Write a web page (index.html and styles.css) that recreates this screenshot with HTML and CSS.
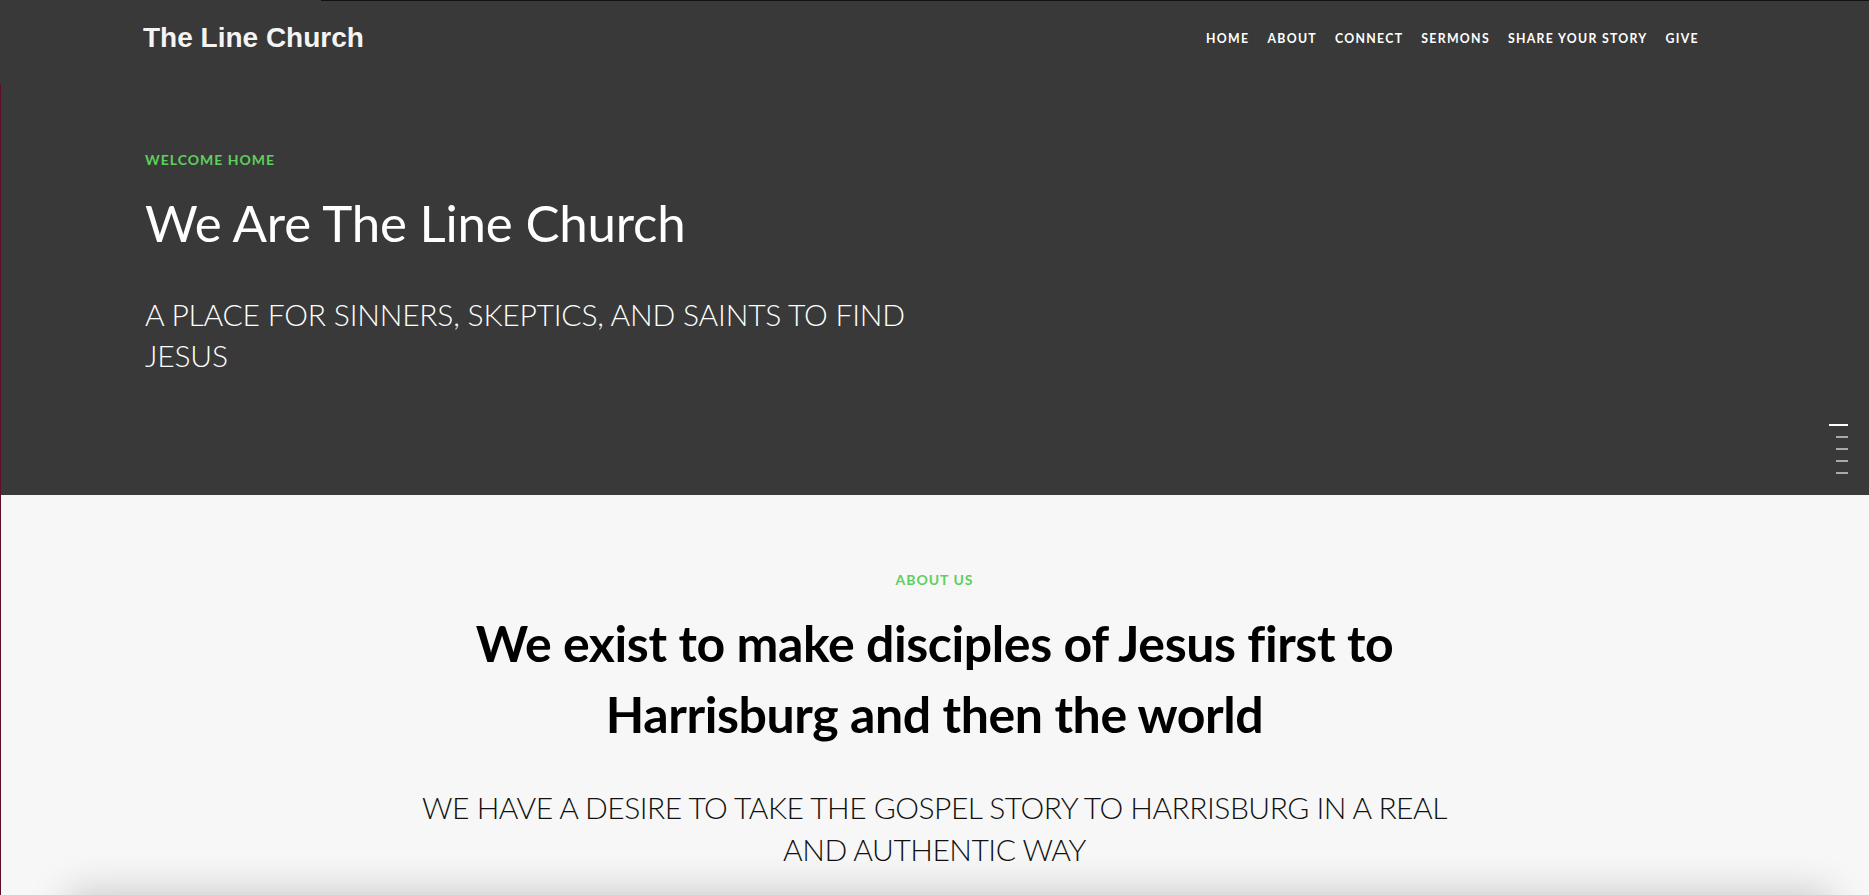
FILE: index.html
```html
<!DOCTYPE html>
<html lang="en">
<head>
<meta charset="utf-8">
<title>The Line Church</title>
<link rel="stylesheet" href="styles.css">
</head>
<body>
<div class="frame">
  <section class="hero">
    <header class="topbar">
      <div class="logo">The Line Church</div>
      <nav class="nav">
        <a href="#">Home</a>
        <a href="#">About</a>
        <a href="#">Connect</a>
        <a href="#">Sermons</a>
        <a href="#">Share Your Story</a>
        <a href="#">Give</a>
      </nav>
    </header>
    <div class="hero-content">
      <p class="eyebrow">Welcome Home</p>
      <h1 class="hero-title">We Are The Line Church</h1>
      <p class="hero-sub">A place for sinners, skeptics, and saints to find Jesus</p>
    </div>
    <div class="scroll-dots">
      <span class="dot active"></span>
      <span class="dot"></span>
      <span class="dot"></span>
      <span class="dot"></span>
      <span class="dot"></span>
    </div>
  </section>
  <section class="about">
    <p class="eyebrow center">About Us</p>
    <h2 class="about-title">We exist to make disciples of Jesus first to Harrisburg and then the world</h2>
    <p class="about-sub">We have a desire to take the gospel story to Harrisburg in a real and authentic way</p>
  </section>
</div>
<div class="bottom-shade"></div>
</body>
</html>
```

FILE: styles.css
```css
* { box-sizing: border-box; }
html, body { margin: 0; padding: 0; }
body {
  background: #f7f7f7;
  font-family: "Lato", "Noto Sans", sans-serif;
  height: 895px;
  overflow: hidden;
}
.frame {
  position: relative;
  height: 895px;
  overflow: hidden;
}
.frame::before {
  content: "";
  position: absolute;
  left: 0;
  top: 84px;
  bottom: 0;
  width: 1px;
  background: #5e0f27;
  z-index: 5;
}
.frame::after {
  content: "";
  position: absolute;
  left: 321px;
  right: 0;
  top: 0;
  height: 1px;
  background: #111;
  z-index: 5;
}
.hero {
  position: relative;
  background: #393939;
  height: 495px;
  color: #fff;
}
.topbar {
  height: 74px;
  display: flex;
  align-items: center;
  justify-content: space-between;
  padding: 0 170px 0 143px;
}
.logo {
  font-family: "Liberation Sans", Arial, sans-serif;
  font-weight: 700;
  font-size: 28px;
  color: #f4f4f4;
  padding-top: 1px;
}
.nav {
  display: flex;
  gap: 18px;
  padding-top: 2px;
}
.nav a {
  color: #fff;
  text-decoration: none;
  text-transform: uppercase;
  font-weight: 700;
  font-size: 12.3px;
  letter-spacing: 1.3px;
}
.hero-content {
  padding: 76px 0 0 145px;
}
.eyebrow {
  margin: 0;
  color: #5dcf5d;
  font-size: 14px;
  line-height: 20px;
  font-weight: 700;
  letter-spacing: 1px;
  text-transform: uppercase;
}
.eyebrow.center { text-align: center; }
.hero-title {
  margin: 18px 0 0;
  font-weight: 400;
  font-size: 51px;
  line-height: 70px;
  letter-spacing: -0.2px;
}
.hero-sub {
  margin: 36px 0 0;
  max-width: 800px;
  font-weight: 300;
  font-size: 30px;
  line-height: 41px;
  letter-spacing: -0.2px;
  text-transform: uppercase;
}
.scroll-dots {
  position: absolute;
  right: 21px;
  top: 424px;
  display: flex;
  flex-direction: column;
  align-items: flex-end;
  gap: 10px;
}
.dot {
  display: block;
  width: 12px;
  height: 2px;
  background: #a9a9a9;
}
.dot.active { width: 19px; background: #fff; }
.about {
  padding-top: 75px;
  text-align: center;
}
.about-title {
  margin: 18px auto 0;
  max-width: 980px;
  font-weight: 700;
  font-size: 50px;
  line-height: 71px;
  letter-spacing: -0.4px;
  color: #000;
}
.about-sub {
  margin: 36px auto 0;
  max-width: 1060px;
  font-weight: 300;
  font-size: 30px;
  line-height: 42px;
  letter-spacing: -0.5px;
  text-transform: uppercase;
  color: #111;
}
.bottom-shade {
  position: fixed;
  left: 70px;
  right: 40px;
  top: 100%;
  height: 100px;
  box-shadow: 0 0 40px 2px rgba(0, 0, 0, 0.2);
}
```
